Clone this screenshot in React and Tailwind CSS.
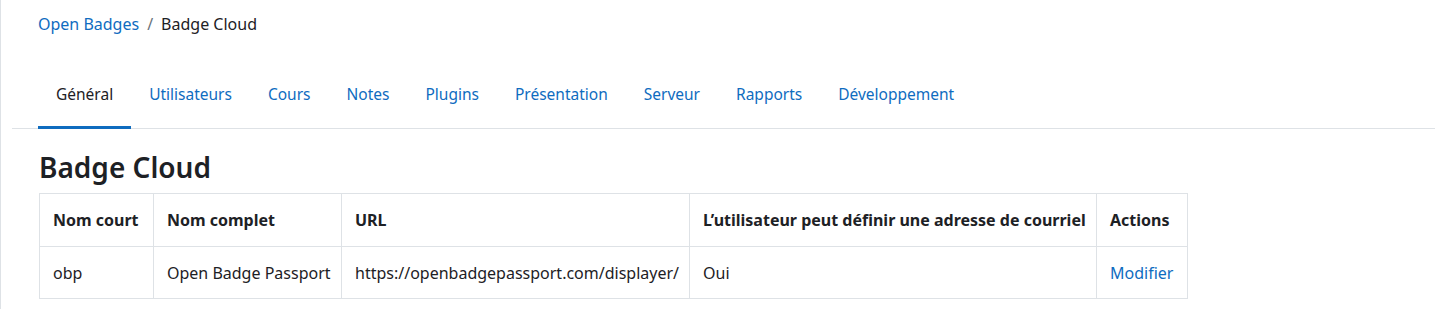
import React from 'react';

const tabs = ['Général', 'Utilisateurs', 'Cours', 'Notes', 'Plugins', 'Présentation', 'Serveur', 'Rapports', 'Développement'];

const font = { fontFamily: '"Noto Sans", "Open Sans", sans-serif' };

const cols = [
  { w: 'w-[114px]', head: 'Nom court', cell: 'obp' },
  { w: 'w-[188px]', head: 'Nom complet', cell: 'Open Badge Passport' },
  { w: 'w-[348px]', head: 'URL', cell: 'https://openbadgepassport.com/displayer/' },
  { w: 'w-[407px]', head: 'L’utilisateur peut définir une adresse de courriel', cell: 'Oui' },
  { w: 'w-[91px]', head: 'Actions', cell: null },
];

export default function App() {
  return (
    <div className="h-[309px] w-[1435px] bg-white border-l border-[#dee2e6] text-[16px] text-[#1d2125]" style={font}>
      <nav className="flex items-center gap-2 pl-[37px] pt-[12px] h-[24px] box-content">
        <a className="text-[#0f6cbf]">Open Badges</a>
        <span className="text-[#6a737b]">/</span>
        <span>Badge Cloud</span>
      </nav>

      <div className="ml-[11px] mt-[35px] border-b border-[#dee2e6]">
        <ul className="flex pl-[26px] text-[15.5px]">
          {tabs.map((t, i) => (
            <li
              key={t}
              className={
                'h-[58px] flex items-center pb-[8px] px-[18px] border-b-[3px] -mb-px ' +
                (i === 0 ? 'border-[#0f6cbf] text-[#1d2125]' : 'border-transparent text-[#0f6cbf]')
              }
            >
              {t}
            </li>
          ))}
        </ul>
      </div>

      <div className="pl-[38px]">
        <h2 className="text-[28px] font-semibold leading-[28px] pt-[24px] pb-[12px]">Badge Cloud</h2>
        <table className="border-collapse table-fixed w-[1148px]">
          <thead>
            <tr className="h-[53px]">
              {cols.map((c) => (
                <th key={c.head} className={c.w + ' border border-[#dee2e6] px-[13px] text-left font-bold whitespace-nowrap'}>
                  {c.head}
                </th>
              ))}
            </tr>
          </thead>
          <tbody>
            <tr className="h-[52px]">
              {cols.map((c) => (
                <td key={c.head} className="border border-[#dee2e6] px-[13px] whitespace-nowrap">
                  {c.cell ?? <a className="text-[#0f6cbf]">Modifier</a>}
                </td>
              ))}
            </tr>
          </tbody>
        </table>
      </div>
    </div>
  );
}
